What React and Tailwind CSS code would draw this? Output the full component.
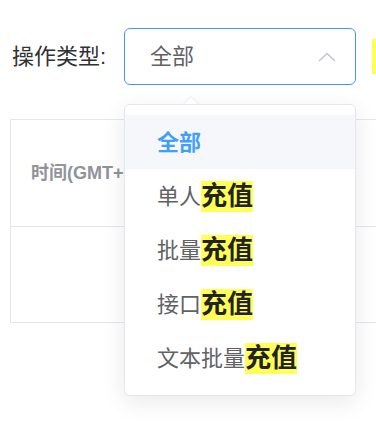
import { useState } from "react";

const options = [
  { pre: "全部", hit: "" },
  { pre: "单人", hit: "充值" },
  { pre: "批量", hit: "充值" },
  { pre: "接口", hit: "充值" },
  { pre: "文本批量", hit: "充值" },
];

export default function App() {
  const [value] = useState("全部");

  return (
    <div className="relative w-[376px] h-[438px] overflow-hidden bg-white font-['Liberation_Sans','Noto_Sans_CJK_SC',sans-serif]">
      {/* filter row */}
      <div className="flex items-center pt-[28px] pl-[12px]">
        <span className="shrink-0 text-[22px] text-[#303133] leading-none w-[112px]">操作类型:</span>
        <div className="relative shrink-0">
          <div className="w-[232px] h-[57px] border border-[#4d94f0] rounded-[6px] flex items-center justify-between pl-[25px] pr-[19px]">
            <span className="text-[22px] text-[#606266]">{value}</span>
            <svg width="18" height="10" viewBox="0 0 18 10" fill="none">
              <polyline points="1,9 9,1.5 17,9" stroke="#c0c4cc" strokeWidth="1.4" />
            </svg>
          </div>

          {/* dropdown */}
          <div className="absolute left-0 top-[76px] z-10 w-[232px]">
            <div className="absolute left-[59px] top-[-8px] w-0 h-0 border-x-[8px] border-x-transparent border-b-[8px] border-b-[#e4e7ed]" />
            <div className="absolute left-[60px] top-[-7px] w-0 h-0 border-x-[7px] border-x-transparent border-b-[7px] border-b-white" />
            <div className="bg-white border border-[#e4e7ed] rounded-[6px] py-[10px] shadow-[0_6px_24px_rgba(0,0,0,0.09)]">
              {options.map((o, i) => (
                <div
                  key={i}
                  className={`h-[54px] flex items-center pl-[32px] text-[22px] ${
                    i === 0 ? "bg-[#f5f7fa] text-[#409eff] font-bold" : "text-[#606266]"
                  }`}
                >
                  <span>{o.pre}</span>
                  {o.hit && (
                    <span className="inline-block h-[31px] leading-[31px] text-[26px] font-bold text-[#222] bg-[#ffff55]">
                      {o.hit}
                    </span>
                  )}
                </div>
              ))}
            </div>
          </div>
        </div>
        <div className="shrink-0 ml-[16px] w-[10px] h-[35px] bg-[#ffff55]" />
      </div>

      {/* table */}
      <div className="ml-[10px] mt-[34px] border-l border-t border-b border-[#e4e7ed]">
        <div className="h-[107px] flex items-center pl-[20px] border-b border-[#e4e7ed]">
          <span className="text-[18px] font-bold text-[#909399] whitespace-nowrap">时间(GMT+8)</span>
        </div>
        <div className="h-[95px]" />
      </div>
    </div>
  );
}
